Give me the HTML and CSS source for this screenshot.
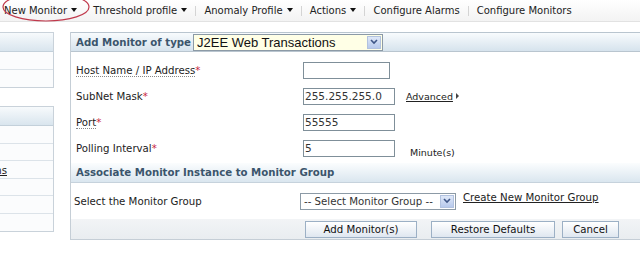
FILE: index.html
```html
<!DOCTYPE html>
<html lang="en">
<head>
  <meta charset="UTF-8">
  <meta name="viewport" content="width=device-width, initial-scale=1.0">
  <link rel="stylesheet" href="styles.css">
  <title>New Monitor</title>
</head>
<body>
  <div class="topnav">
    <a class="menu first">New Monitor <span class="caret"></span></a>
    <a class="menu">Threshold profile <span class="caret"></span></a>
    <a class="menu sep">Anomaly Profile <span class="caret"></span></a>
    <a class="menu sep">Actions <span class="caret"></span></a>
    <a class="menu sep">Configure Alarms</a>
    <a class="menu sep">Configure Monitors</a>
    <!-- hand drawn mark round the first menu -->
    <svg class="circle" width="96" height="28" viewBox="0 0 96 28">
      <ellipse cx="46" cy="10" rx="43" ry="14" fill="none" stroke="#c0394c" stroke-width="1.2"/>
    </svg>
  </div>

  <div class="page">
    <aside class="sidebar">
      <div class="sidebox">
        <div class="sidebox-head"></div>
        <div class="sidebox-row"></div>
        <div class="sidebox-row last"></div>
      </div>
      <div class="sidebox">
        <div class="sidebox-head"></div>
        <div class="sidebox-row"></div>
        <div class="sidebox-row"></div>
        <div class="sidebox-row"><a class="cut-link">Alarms</a></div>
        <div class="sidebox-row"></div>
        <div class="sidebox-row"></div>
        <div class="sidebox-row last"></div>
      </div>
    </aside>

    <section class="panel">
      <div class="panel-head">
        <span class="panel-title">Add Monitor of type</span>
        <span class="select-wrap type-select">
          <select class="select-box">
            <option>J2EE Web Transactions</option>
          </select>
          <span class="select-btn">
            <svg width="8" height="6" viewBox="0 0 8 6"><polyline points="1,1 4,4 7,1" fill="none" stroke="#3f5687" stroke-width="1.6"/></svg>
          </span>
        </span>
      </div>

      <div class="form-grid">
        <div class="label"><span class="hint">Host Name / IP Address</span><span class="req">*</span></div>
        <div class="field"><input class="txt short" type="text" value=""></div>
        <div class="extra"></div>

        <div class="label">SubNet Mask<span class="req">*</span></div>
        <div class="field"><input class="txt" type="text" value="255.255.255.0"></div>
        <div class="extra"><a class="advanced">Advanced</a> <span class="arrow-right"></span></div>

        <div class="label"><span class="hint">Port</span><span class="req">*</span></div>
        <div class="field"><input class="txt" type="text" value="55555"></div>
        <div class="extra"></div>

        <div class="label">Polling Interval<span class="req">*</span></div>
        <div class="field"><input class="txt" type="text" value="5"></div>
        <div class="extra"><span class="unit">Minute(s)</span></div>
      </div>

      <div class="section-head">Associate Monitor Instance to Monitor Group</div>

      <div class="group-row">
        <div class="group-label">Select the Monitor Group</div>
        <span class="select-wrap group-select">
          <select class="select-box">
            <option>-- Select Monitor Group --</option>
          </select>
          <span class="select-btn">
            <svg width="8" height="6" viewBox="0 0 8 6"><polyline points="1,1 4,4 7,1" fill="none" stroke="#3f5687" stroke-width="1.6"/></svg>
          </span>
        </span>
        <a class="create-link">Create New Monitor Group</a>
      </div>

      <div class="button-bar">
        <button class="btn btn-add">Add Monitor(s)</button>
        <button class="btn btn-restore">Restore Defaults</button>
        <button class="btn btn-cancel">Cancel</button>
      </div>
    </section>
  </div>
</body>
</html>
```

FILE: styles.css
```css
body {
  margin: 0;
  font-family: 'DejaVu Sans', Verdana, sans-serif;
  font-size: 10.2px;
  color: #222;
  background: #fff;
  overflow: hidden;
}

a {
  color: #222;
}

.topnav {
  position: relative;
  height: 22px;
  display: flex;
  align-items: center;
  font-size: 10px;
  background: linear-gradient(#ffffff, #f3f3f3);
  border-bottom: 1px solid #e2e2e2;
  box-sizing: border-box;
}

.menu {
  padding: 0 8px;
  line-height: 10px;
  white-space: nowrap;
  text-decoration: none;
}

.menu.first {
  padding-left: 4px;
}

.menu.sep {
  border-left: 1px solid #d4d4d4;
}

.caret {
  display: inline-block;
  width: 0;
  height: 0;
  margin-left: 1px;
  vertical-align: 2px;
  border-left: 3px solid transparent;
  border-right: 3px solid transparent;
  border-top: 4px solid #111;
}

.circle {
  position: absolute;
  left: 0;
  top: -3px;
}

.page {
  display: flex;
  align-items: flex-start;
  padding-top: 10px;
}

.sidebar {
  width: 54px;
  overflow: hidden;
  flex-shrink: 0;
}

.sidebox {
  border: 1px solid #c9d2da;
  border-left: none;
  margin-bottom: 18px;
}

.sidebox:last-child {
  margin-bottom: 0;
}

.sidebox-head {
  height: 18px;
  background: linear-gradient(#f7fafc, #d9e5ee);
  border-bottom: 1px solid #c3d0da;
}

.sidebox-row {
  height: 17.5px;
  border-bottom: 1px solid #dce3e9;
  background: #fbfcfd;
  display: flex;
  justify-content: flex-end;
  align-items: center;
  width: 8px;
  min-width: 100%;
  box-sizing: border-box;
}

.sidebox-row.last {
  border-bottom: none;
}

.cut-link {
  white-space: nowrap;
  padding-right: 46px;
  padding-top: 2px;
  text-decoration: underline;
}

.panel {
  flex: 1;
  margin-left: 16px;
  border-left: 1px solid #c5ced6;
  border-bottom: 1px solid #c5ced6;
  background: #fff;
}

.panel-head {
  height: 18px;
  display: flex;
  align-items: center;
  background: linear-gradient(#f8fbfd, #d6e3ed);
  border-top: 1px solid #b9c5cf;
  border-bottom: 1px solid #b9c5cf;
}

.panel-title {
  font-weight: bold;
  color: #3b556c;
  padding-left: 5px;
  width: 117px;
  white-space: nowrap;
}

.select-wrap {
  display: inline-flex;
  align-items: center;
  border: 1px solid #8c9aa6;
  height: 15px;
  box-sizing: content-box;
}

.select-box {
  appearance: none;
  -webkit-appearance: none;
  border: none;
  outline: none;
  margin: 0;
  padding: 0 3px;
  height: 15px;
  flex: 1;
  background: transparent;
  color: #111;
}

.type-select {
  width: 188px;
  background: #ffffe6;
}

.type-select .select-box {
  font-family: 'Liberation Sans', Arial, sans-serif;
  font-size: 13px;
}

.select-btn {
  width: 14px;
  height: 13px;
  margin-right: 1px;
  display: flex;
  align-items: center;
  justify-content: center;
  background: linear-gradient(#dfe8f8, #b7c9ec);
  border: 1px solid #b2c2df;
  box-sizing: border-box;
}

.form-grid {
  display: grid;
  grid-template-columns: 232px 103px 1fr;
  grid-auto-rows: 26px;
  padding-top: 5px;
  align-items: center;
}

.label {
  padding-left: 5px;
}

.hint {
  border-bottom: 1px dotted #888;
}

.req {
  color: #c8263b;
}

.txt {
  width: 92px;
  height: 17px;
  box-sizing: border-box;
  border: 1px solid #7f8f99;
  padding: 0 1px;
  margin: 0;
  font-family: 'DejaVu Sans', Verdana, sans-serif;
  font-size: 10.5px;
  color: #333;
}

.txt.short {
  width: 87px;
}

.advanced {
  font-size: 9.5px;
  text-decoration: underline;
}

.arrow-right {
  display: inline-block;
  width: 0;
  height: 0;
  vertical-align: 1px;
  border-top: 3px solid transparent;
  border-bottom: 3px solid transparent;
  border-left: 3px solid #444;
}

.unit {
  font-size: 9.5px;
  margin-left: 4px;
  position: relative;
  top: 4px;
}

.section-head {
  margin-top: 2px;
  height: 19px;
  line-height: 19px;
  padding-left: 5px;
  font-weight: bold;
  color: #3b556c;
  background: linear-gradient(#fbfdfe, #dae6ef);
  border-bottom: 1px solid #c6d2dc;
}

.group-row {
  height: 36px;
  display: flex;
  align-items: center;
}

.group-label {
  width: 226px;
  padding-left: 3px;
}

.group-select {
  width: 154px;
  background: #fff;
}

.group-select .select-box {
  font-family: 'DejaVu Sans', Verdana, sans-serif;
  font-size: 10.2px;
  color: #333;
}

.create-link {
  margin-left: 7px;
  margin-top: -8px;
  text-decoration: underline;
}

.button-bar {
  height: 20px;
  display: flex;
  align-items: center;
  background: linear-gradient(#f2f4f6, #e9edf0);
  padding-left: 234px;
}

.btn {
  height: 17px;
  padding: 0;
  border: 1px solid #9cb0c5;
  background: linear-gradient(#ffffff, #dfe7f0);
  font-family: 'DejaVu Sans', Verdana, sans-serif;
  font-size: 10.2px;
  color: #111;
  cursor: pointer;
}

.btn-add {
  width: 112px;
}

.btn-restore {
  width: 124px;
  margin-left: 14px;
}

.btn-cancel {
  width: 57px;
  margin-left: 7px;
}
```
